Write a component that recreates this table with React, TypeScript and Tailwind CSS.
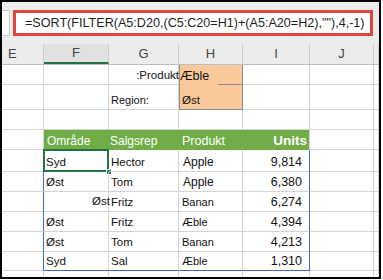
import type { ReactNode } from 'react';

// column widths incl. right gridline: E, F, G, H, I, J, rest
const W = ['w-[42px]', 'w-[65px]', 'w-[70px]', 'w-[64px]', 'w-[67px]', 'w-[64px]', 'w-[5px]'];
const GRID = 'border-r border-b border-[#d4d4d4]';

interface Sale {
  area: string;
  rep: string;
  prod: string;
  units: string;
  h: string;
  shifted?: boolean;
}

const sales: Sale[] = [
  { area: 'Syd', rep: 'Hector', prod: 'Apple', units: '9,814', h: 'h-[22px]' },
  { area: 'Øst', rep: 'Tom', prod: 'Apple', units: '6,380', h: 'h-[20px]' },
  { area: 'Øst', rep: 'Fritz', prod: 'Banan', units: '6,274', h: 'h-[20px]', shifted: true },
  { area: 'Øst', rep: 'Fritz', prod: 'Æble', units: '4,394', h: 'h-[20px]' },
  { area: 'Øst', rep: 'Tom', prod: 'Banan', units: '4,213', h: 'h-[20px]' },
  { area: 'Syd', rep: 'Sal', prod: 'Æble', units: '1,310', h: 'h-[19px]' },
];

function Cell({ i, className = '', children }: { i: number; className?: string; children?: ReactNode }) {
  return (
    <div className={`${W[i]} relative h-full shrink-0 flex items-end pb-[2px] leading-[14px] ${className}`}>
      {children}
    </div>
  );
}

function EmptyRow({ h }: { h: string }) {
  return (
    <div className={`flex ${h}`}>
      {W.map((_, i) => (
        <Cell key={i} i={i} className={GRID} />
      ))}
    </div>
  );
}

export default function App() {
  const letters = ['E', 'F', 'G', 'H', 'I', 'J', ''];

  return (
    <div className="w-[383px] h-[280px] bg-white font-['Liberation_Sans',Arial,sans-serif] text-[#111]">
      <div className="w-[381px] h-[279px] border-2 border-black flex flex-col overflow-hidden bg-white">
        {/* formula bar */}
        <div className="h-[42px] shrink-0 bg-[#ececec] flex items-start pt-[8px]">
          <div className="w-[8px] h-[26px] bg-white border border-l-0 border-[#c8c8c8]" />
          <div className="ml-[3px] w-[360px] h-[26px] bg-white border-[3px] border-[#e2453c] flex items-center pl-[9px] text-[12.6px] text-[#1e1e1e] whitespace-nowrap">
            =SORT(FILTER(A5:D20,(C5:C20=H1)+(A5:A20=H2),""),4,-1)
          </div>
        </div>

        {/* column headers */}
        <div className="flex h-[21px] shrink-0 bg-[#ececec] border-b border-[#bdbdbd]">
          {letters.map((l, i) => (
            <div
              key={i}
              className={`${W[i]} shrink-0 h-full border-r border-[#cfcfcf] flex items-center text-[13px] text-[#444] ${
                i === 0 ? 'pl-[6px]' : 'justify-center'
              } ${i === 1 ? 'bg-[#e1e1e1] border-b-2 border-b-[#217346]' : ''}`}
            >
              {l}
            </div>
          ))}
        </div>

        {/* Produkt row */}
        <div className="flex h-[20px] shrink-0">
          <Cell i={0} className={GRID} />
          <Cell i={1} className={GRID} />
          <Cell i={2} className={`${GRID} justify-end text-[11.5px]`}>
            <span className="-mr-[1px]">:Produkt</span>
          </Cell>
          <Cell i={3} className="bg-[#f9c99b] border-l border-r border-[#8c8c8c] text-[12.5px]">
            <span>Æble</span>
            <span className="absolute right-0 bottom-0 w-[24px] h-px bg-[#8c8c8c]" />
          </Cell>
          <Cell i={4} className={GRID} />
          <Cell i={5} className={GRID} />
          <Cell i={6} className={GRID} />
        </div>

        {/* Region row */}
        <div className="flex h-[25px] shrink-0">
          <Cell i={0} className={GRID} />
          <Cell i={1} className={GRID} />
          <Cell i={2} className={`${GRID} pl-[2px] text-[11px]`}>
            Region:
          </Cell>
          <Cell i={3} className="bg-[#f9c99b] border-l border-r border-b border-[#8c8c8c] pl-[2px] text-[11.5px]">
            Øst
          </Cell>
          <Cell i={4} className={GRID} />
          <Cell i={5} className={GRID} />
          <Cell i={6} className={GRID} />
        </div>

        <EmptyRow h="h-[20px] shrink-0" />

        {/* table header */}
        <div className="flex h-[20px] shrink-0">
          <Cell i={0} className={GRID} />
          <Cell i={1} className="bg-[#70ad47] pl-[3px] text-[12px] text-white">
            Område
          </Cell>
          <Cell i={2} className="bg-[#70ad47] pl-[1px] text-[12px] text-white">
            Salgsrep
          </Cell>
          <Cell i={3} className="bg-[#70ad47] pl-[3px] text-[12.5px] text-white">
            Produkt
          </Cell>
          <Cell i={4} className="bg-[#70ad47] justify-end pr-[2px] text-[13.5px] font-bold text-white border-r border-[#d4d4d4]">
            Units
          </Cell>
          <Cell i={5} className={GRID} />
          <Cell i={6} className={GRID} />
        </div>

        {/* data rows */}
        {sales.map((s, r) => {
          const last = r === sales.length - 1;
          const bottom = last ? 'border-b border-b-[#4169b0]' : 'border-b border-b-[#d4d4d4]';
          return (
            <div key={r} className={`flex shrink-0 ${s.h}`}>
              <Cell i={0} className="border-r border-r-[#4169b0] border-b border-b-[#d4d4d4]" />
              <Cell
                i={1}
                className={`border-r border-r-[#d4d4d4] ${bottom} text-[11.5px] ${
                  s.shifted ? 'justify-end pb-[3px]' : 'pl-[2px]'
                }`}
              >
                <span className={s.shifted ? '-mr-[2px]' : ''}>{s.area}</span>
                {r === 0 && (
                  <>
                    <span className="absolute -left-px -top-px -right-px -bottom-px border-2 border-[#217346]" />
                    <span className="absolute -right-[4px] -bottom-[4px] w-[6px] h-[6px] bg-[#217346] border border-white" />
                  </>
                )}
              </Cell>
              <Cell i={2} className={`border-r border-r-[#d4d4d4] ${bottom} pl-[2px] text-[11.5px]`}>
                {s.rep}
              </Cell>
              <Cell
                i={3}
                className={`border-r border-r-[#d4d4d4] ${bottom} pl-[3px] ${s.prod === 'Apple' ? 'text-[12px] pl-[4px]' : 'text-[11px]'}`}
              >
                {s.prod}
              </Cell>
              <Cell i={4} className={`border-r border-r-[#4169b0] ${bottom} justify-end pr-[7px] text-[12.5px]`}>
                {s.units}
              </Cell>
              <Cell i={5} className={GRID} />
              <Cell i={6} className={GRID} />
            </div>
          );
        })}

        <EmptyRow h="h-[20px] shrink-0" />
      </div>
    </div>
  );
}
